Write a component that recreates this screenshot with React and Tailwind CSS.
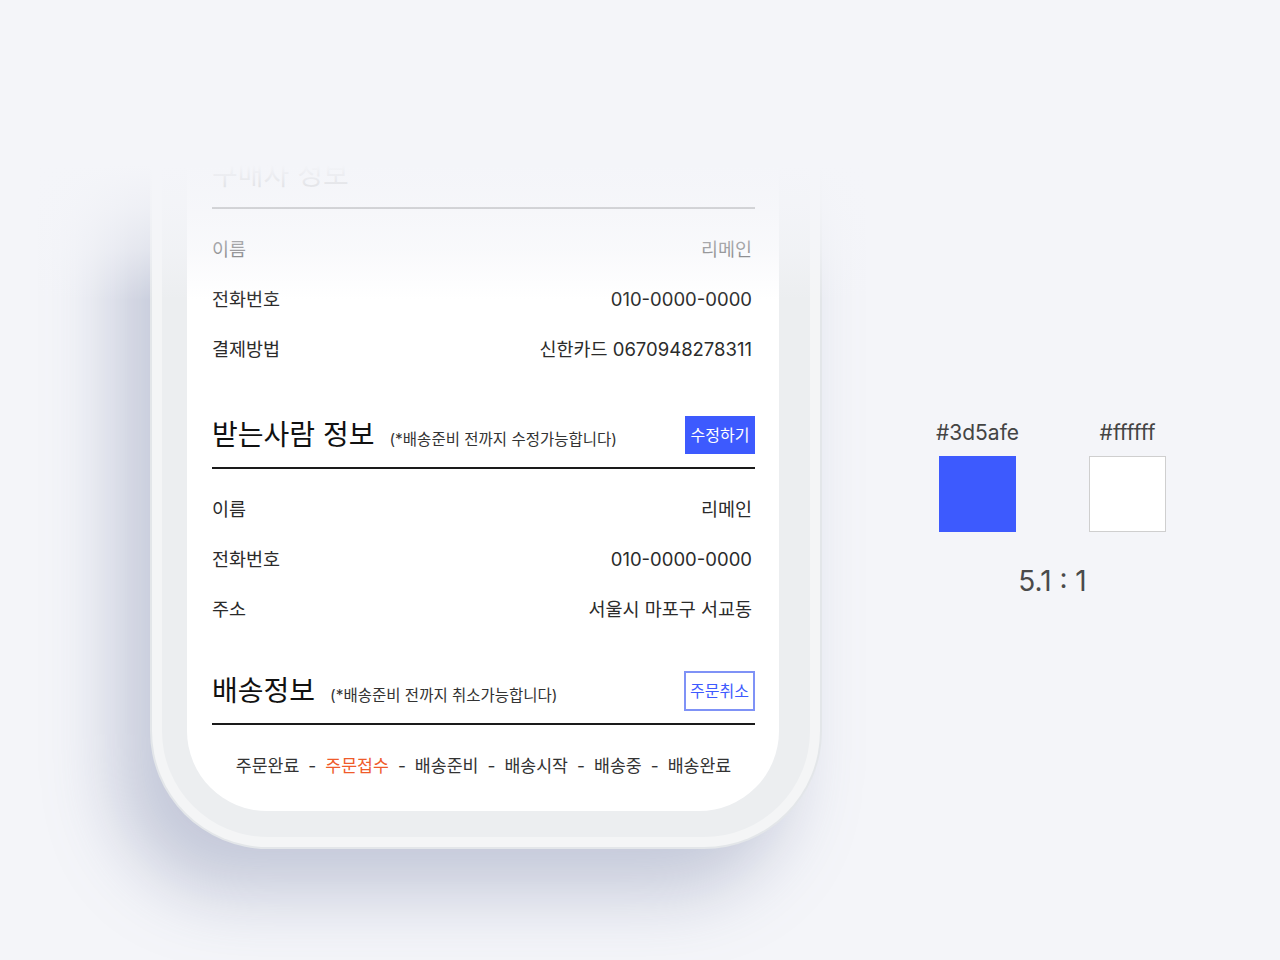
import React from 'react'

const font = "font-['Inter','Noto_Sans_CJK_KR','Noto_Sans',sans-serif]"

// ── section header: title + note + optional button, black rule underneath
function SectionHeader({ title, note, button }) {
  return (
    <div className="border-b-2 border-[#1a1a1a] pb-[13px]">
      <div className="flex items-center justify-between h-[38px]">
        <div className="flex items-baseline">
          <span className="text-[28px] leading-none text-[#111]">{title}</span>
          {note && <span className="ml-[15px] text-[15.5px] leading-none text-[#333]">{note}</span>}
        </div>
        {button}
      </div>
    </div>
  )
}

function Row({ label, value }) {
  return (
    <div className="flex items-center justify-between h-[50px] pr-[3px] text-[18.5px] text-[#2b2b2b]">
      <span>{label}</span>
      <span>{value}</span>
    </div>
  )
}

const steps = ['주문완료', '주문접수', '배송준비', '배송시작', '배송중', '배송완료']

function Phone() {
  return (
    <div className="relative ml-[150px] mt-[60px] w-[672px]">
      <div className="rounded-b-[118px] bg-[#e3e6e9] px-[2px] pb-[2px] shadow-[-34px_44px_70px_rgba(118,130,165,0.38)]">
        <div className="rounded-b-[116px] bg-[#f4f5f6] px-[10px] pb-[10px]">
          <div className="rounded-b-[106px] bg-[#eceef0] pl-[25px] pr-[31px] pb-[26px]">
            <div className="rounded-b-[80px] bg-white pl-[25px] pr-[24px] pt-[96px] pb-[20px]">
              <SectionHeader title="구매자 정보" />
              <div className="pt-4">
                <Row label="이름" value="리메인" />
                <Row label="전화번호" value="010-0000-0000" />
                <Row label="결제방법" value="신한카드 0670948278311" />
              </div>

              <div className="mt-[41px]">
                <SectionHeader
                  title="받는사람 정보"
                  note="(*배송준비 전까지 수정가능합니다)"
                  button={
                    <button className="w-[70px] h-[38px] flex items-center justify-center bg-[#3d5afe] text-white text-[16px]">
                      수정하기
                    </button>
                  }
                />
                <div className="pt-4">
                  <Row label="이름" value="리메인" />
                  <Row label="전화번호" value="010-0000-0000" />
                  <Row label="주소" value="서울시 마포구 서교동" />
                </div>
              </div>

              <div className="mt-[37px]">
                <SectionHeader
                  title="배송정보"
                  note="(*배송준비 전까지 취소가능합니다)"
                  button={
                    <button className="w-[71px] h-[40px] flex items-center justify-center border-2 border-[#7f92f6] text-[#3d5afe] text-[16px]">
                      주문취소
                    </button>
                  }
                />
                <div className="pt-4">
                  <div className="flex items-center justify-center h-[50px] text-[17.3px] text-[#333]">
                    {steps.map((s, i) => (
                      <React.Fragment key={s}>
                        {i > 0 && <span className="mx-[9px]">-</span>}
                        <span className={i === 1 ? 'text-[#ef5b2b]' : ''}>{s}</span>
                      </React.Fragment>
                    ))}
                  </div>
                </div>
              </div>
            </div>
          </div>
        </div>
      </div>
      {/* top fade, phone disappears into the background */}
      <div className="absolute -left-[140px] -right-[70px] -top-[60px] h-[300px] bg-[linear-gradient(to_bottom,#f4f5f9_0%,#f4f5f9_55%,rgba(244,245,249,0.95)_60%,rgba(244,245,249,0.85)_69%,rgba(244,245,249,0.58)_83%,rgba(244,245,249,0)_100%)]" />
    </div>
  )
}

function Contrast() {
  return (
    <div className="ml-[117px] mt-[419px] w-[227px] flex flex-col items-center text-[#444]">
      <div className="flex gap-[73px]">
        <div className="w-[77px] flex flex-col items-center">
          <span className="text-[21px] leading-[28px] whitespace-nowrap">#3d5afe</span>
          <div className="mt-[9px] w-[77px] h-[76px] bg-[#3d5afe]" />
        </div>
        <div className="w-[77px] flex flex-col items-center">
          <span className="text-[21px] leading-[28px] whitespace-nowrap">#ffffff</span>
          <div className="mt-[9px] w-[77px] h-[76px] bg-white border border-[#cfcfcf]" />
        </div>
      </div>
      <div className="mt-[31px] text-[28px] leading-[36px] text-[#4a4a4a]">5.1 : 1</div>
    </div>
  )
}

export default function App() {
  return (
    <div className={`${font} w-full h-[960px] bg-[#f4f5f9] overflow-hidden flex items-start`}>
      <Phone />
      <Contrast />
    </div>
  )
}
